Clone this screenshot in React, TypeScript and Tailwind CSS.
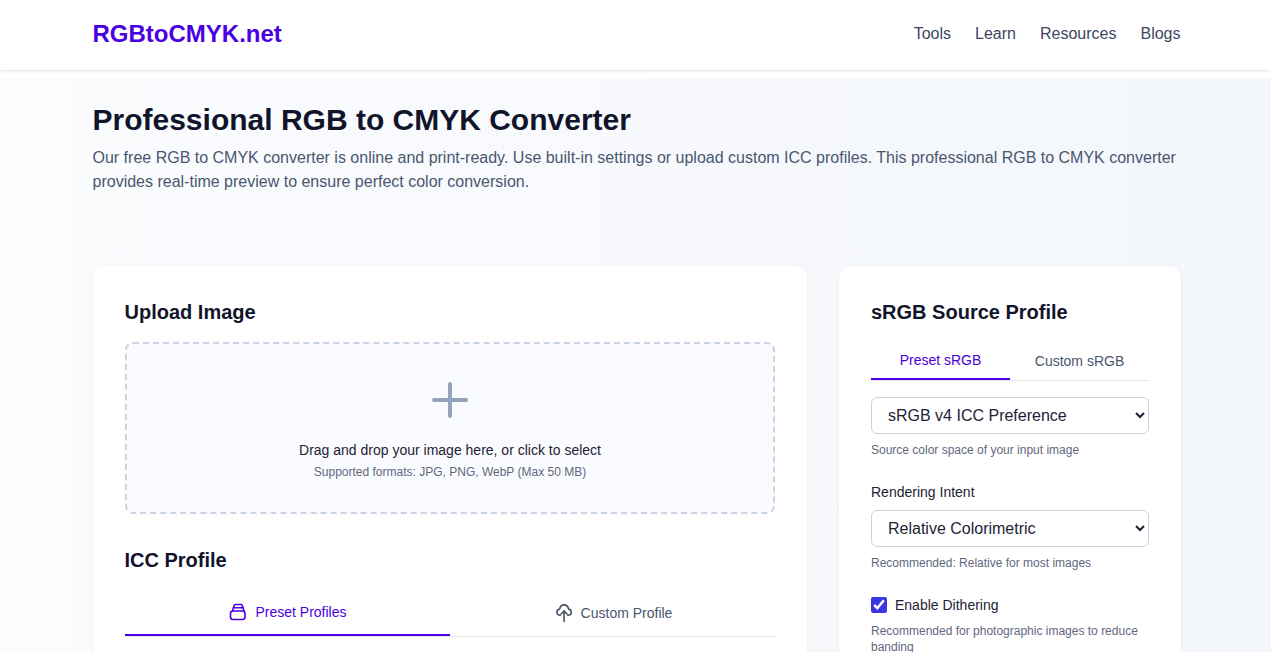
const NAV_LINKS = ["Tools", "Learn", "Resources", "Blogs"];

function PresetIcon() {
  return (
    <svg width="18" height="18" viewBox="0 0 18 18" fill="none" stroke="#4a00e0" strokeWidth="1.6" strokeLinejoin="round" strokeLinecap="round">
      <rect x="2.5" y="8" width="14.5" height="8.5" rx="2.5" />
      <path d="M4.5 8 L6 3 Q6.3 1.5 7.5 1.5 H13 Q14.2 1.5 14.5 3 L16 8" />
      <path d="M5.5 4.8 H15" />
    </svg>
  );
}

function CloudIcon() {
  return (
    <svg width="18" height="20" viewBox="0 0 18 20" fill="none" stroke="#4a5568" strokeWidth="1.8" strokeLinejoin="round" strokeLinecap="round">
      <g transform="translate(2 0.5) scale(0.9)">
        <path d="M5 13 H4.6 C2.5 13 1 11.5 1 9.6 C1 7.8 2.3 6.4 4 6.2 C4.5 3.5 6.5 1.5 9 1.5 C11.5 1.5 13.5 3.5 14 6.2 C15.7 6.4 17 7.8 17 9.6 C17 11.5 15.5 13 13.4 13 H13" />
        <path d="M9 20 V8.5" />
        <path d="M5.8 11.5 L9 8.3 L12.2 11.5" />
      </g>
    </svg>
  );
}

export default function App() {
  return (
    <div className="h-screen overflow-hidden bg-white font-['Liberation_Sans',Arial,sans-serif]">
      <header className="h-[70px] shadow-[0_1px_3px_rgba(0,0,0,0.12)] pl-[92.5px] pr-[90.5px] pb-[2px] flex items-center justify-between">
        <div className="text-2xl font-bold text-[#4a00e0]">RGBtoCMYK.net</div>
        <nav className="flex gap-6 text-[#3b4660]">
          {NAV_LINKS.map((link) => (
            <a key={link} href="#">{link}</a>
          ))}
        </nav>
      </header>

      <main className="mt-[8px] bg-linear-to-r from-[#fbfcfe] to-[#f3f6fb] pl-[93px] pr-[90px] h-full">
        <div className="-ml-[0.5px]">
          <h1 className="pt-[21px] text-[30px] leading-[42px] font-bold text-[#11142b]">Professional RGB to CMYK Converter</h1>
          <p className="mt-[5px] text-base leading-6 text-[#4a5670]">
            Our free RGB to CMYK converter is online and print-ready. Use built-in settings or upload custom ICC profiles. This professional RGB to CMYK converter provides real-time preview to ensure perfect color conversion.
          </p>
        </div>

        <div className="mt-[72px] flex gap-8 items-start">
          <section className="w-[714px] bg-white rounded-xl shadow-[0_1px_4px_rgba(15,23,42,0.06)] p-8">
            <h2 className="-ml-[0.5px] text-xl leading-7 font-bold text-[#11142b]">Upload Image</h2>
            <div className="mt-4 h-[172px] rounded-lg border-2 border-dashed border-[#cbd5e1] bg-[#fafbfe] flex flex-col items-center pt-[32px]">
              <svg width="48" height="48" viewBox="0 0 48 48" fill="none" stroke="#94a3b8" strokeWidth="4" strokeLinecap="round">
                <path d="M24 8 V40" />
                <path d="M8 24 H40" />
              </svg>
              <p className="mt-[16px] text-sm leading-5 text-[#1e2235]">Drag and drop your image here, or click to select</p>
              <p className="mt-[4px] text-xs leading-4 text-[#5f6880]">Supported formats: JPG, PNG, WebP (Max 50 MB)</p>
            </div>

            <h2 className="-ml-[0.5px] mt-8 text-xl leading-7 font-bold text-[#11142b]">ICC Profile</h2>
            <div className="mt-4 flex text-sm border-b border-[#e2e8f0]">
              <button className="w-1/2 h-[46px] -mb-px border-b-2 border-[#4a00e0] text-[#4a00e0] flex items-center justify-center gap-[9px]">
                <PresetIcon />
                Preset Profiles
              </button>
              <button className="w-1/2 h-[46px] pl-[1px] text-[#4a5670] flex items-center justify-center gap-[9px]">
                <CloudIcon />
                Custom Profile
              </button>
            </div>
          </section>

          <aside className="w-[342px] bg-white rounded-xl shadow-[0_1px_4px_rgba(15,23,42,0.06)] p-8">
            <h2 className="text-xl leading-7 font-bold text-[#11142b]">sRGB Source Profile</h2>
            <div className="mt-4 flex text-sm border-b border-[#e2e8f0]">
              <button className="w-1/2 h-[38px] -mb-px border-b-2 border-[#4a00e0] text-[#4a00e0]">Preset sRGB</button>
              <button className="w-1/2 h-[38px] text-[#4a5670]">Custom sRGB</button>
            </div>
            <select className="mt-[16px] w-full h-[37px] px-3 bg-white border border-[#cdd1de] rounded-md text-base text-[#1e2235]">
              <option>sRGB v4 ICC Preference</option>
            </select>
            <p className="mt-2 text-xs leading-4 text-[#5f6880]">Source color space of your input image</p>

            <label className="block mt-[24px] text-sm leading-5 text-[#1e2235]">Rendering Intent</label>
            <select className="mt-2 w-full h-[37px] px-3 bg-white border border-[#cdd1de] rounded-md text-base text-[#1e2235]">
              <option>Relative Colorimetric</option>
            </select>
            <p className="mt-2 text-xs leading-4 text-[#5f6880]">Recommended: Relative for most images</p>

            <label className="mt-[24px] flex items-center gap-2 text-sm leading-5 text-[#1e2235]">
              <input type="checkbox" defaultChecked readOnly className="w-4 h-4 accent-[#3b35e6] m-0" />
              Enable Dithering
            </label>
            <p className="mt-2 text-xs leading-4 text-[#5f6880]">Recommended for photographic images to reduce banding</p>
          </aside>
        </div>
      </main>
    </div>
  );
}
